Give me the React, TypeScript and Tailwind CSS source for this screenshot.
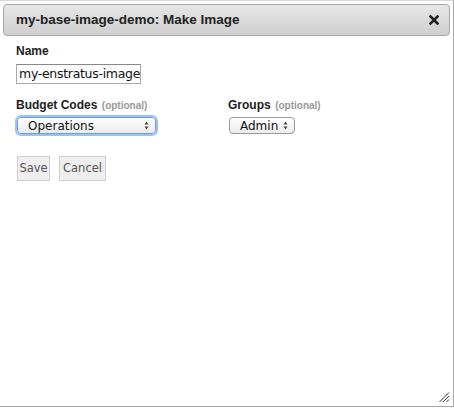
import React from 'react';

const Optional = () => (
  <span className="text-[10px] font-bold text-[#999]">(optional)</span>
);

const SelectBox = ({ label, width, focused }: { label: string; width: string; focused?: boolean }) => (
  <div
    className={`flex items-center justify-between h-[17px] rounded-[4px] border bg-gradient-to-b from-white to-[#ececec] pl-[10px] pr-[6px] ${width} ${
      focused ? 'border-[#6d9ee0] shadow-[0_0_0_2px_#9ec2f0]' : 'border-[#9a9a9a]'
    }`}
  >
    <span className="text-[12px] text-[#111] leading-none font-['DejaVu_Sans',sans-serif]">{label}</span>
    <svg width="5" height="9" viewBox="0 0 5 9">
      <path d="M0.5 3.5 L2.5 0.5 L4.5 3.5 Z" fill="#444" />
      <path d="M0.5 5.5 L2.5 8.5 L4.5 5.5 Z" fill="#444" />
    </svg>
  </div>
);

const App = () => {
  return (
    <div className="w-[454px] h-[408px] bg-white font-['Liberation_Sans',Arial,sans-serif]">
      <div className="relative w-[454px] h-[407px] border-r border-b border-t border-t-[#d8d8d8] border-[#a8a8a8] pt-[3px] px-[3px]">
        {/* Title bar */}
        <div className="flex items-center justify-between h-[32px] rounded-[4px] border border-[#a9a9a9] bg-gradient-to-b from-[#e6e6e6] to-[#cfcfcf] pl-[12px] pr-[10px]">
          <span className="text-[13.5px] font-bold text-[#222]">my-base-image-demo: Make Image</span>
          <svg width="10" height="10" viewBox="0 0 10 10">
            <path d="M1.5 1.5 L8.5 8.5 M8.5 1.5 L1.5 8.5" stroke="#222" strokeWidth="2.6" strokeLinecap="square" />
          </svg>
        </div>

        {/* Form */}
        <div className="pl-[13px] pt-[8px]">
          <div className="text-[12px] font-bold text-[#222] leading-[14px]">Name</div>
          <div className="mt-[6px] w-[125px] h-[20px] border border-[#aaa] border-t-[#888] flex items-center pl-[2px] overflow-hidden whitespace-nowrap">
            <span className="text-[12.5px] text-[#111] font-['DejaVu_Sans',sans-serif] tracking-[-0.3px]">my-enstratus-image</span>
          </div>

          <div className="flex mt-[13px]">
            <div className="w-[212px]">
              <div className="leading-[14px]">
                <span className="text-[12px] font-bold text-[#222]">Budget Codes</span> <Optional />
              </div>
              <div className="mt-[4px] ml-[1px]">
                <SelectBox label="Operations" width="w-[139px]" focused />
              </div>
            </div>
            <div>
              <div className="leading-[14px]">
                <span className="text-[12px] font-bold text-[#222]">Groups</span> <Optional />
              </div>
              <div className="mt-[4px] ml-[1px]">
                <SelectBox label="Admin" width="w-[66px]" />
              </div>
            </div>
          </div>

          <div className="flex gap-[9px] mt-[22px] ml-[1px]">
            <button className="h-[25px] w-[33px] border border-[#cfcfcf] bg-[#eeeeee] text-[11.5px] text-[#555] font-['DejaVu_Sans',sans-serif]">Save</button>
            <button className="h-[25px] w-[47px] border border-[#cfcfcf] bg-[#eeeeee] text-[11.5px] text-[#555] font-['DejaVu_Sans',sans-serif]">Cancel</button>
          </div>
        </div>

        {/* Resize grip */}
        <svg className="absolute right-[3px] bottom-[3px]" width="12" height="12" viewBox="0 0 12 12">
          <path d="M11 1.5 L1.5 11 M11 5 L5 11 M11 8.5 L8.5 11" stroke="#333" strokeWidth="1" />
        </svg>
      </div>
    </div>
  );
};

export default App;
